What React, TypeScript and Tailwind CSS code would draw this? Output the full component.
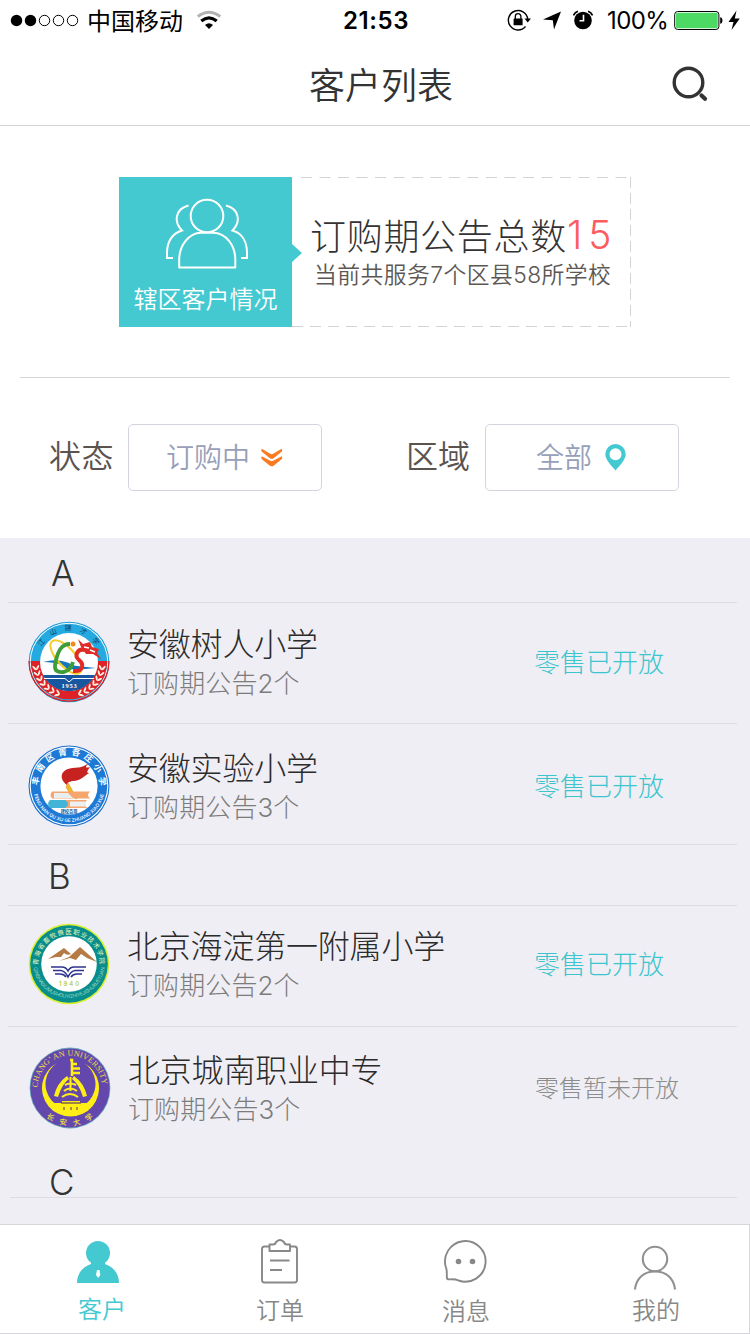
import React from 'react';

const FONT = "font-['Inter','Noto_Sans_CJK_SC',sans-serif] font-[350]";

function StatusBar() {
  return (
    <div className="flex h-10 items-center bg-white text-black">
      <svg className="ml-[10px] h-10 w-[70px]" viewBox="0 0 70 40">
        <circle cx="6.500" cy="20.500" r="5.700" />
        <circle cx="20.500" cy="20.500" r="5.700" />
        <g fill="none" stroke="#000" strokeWidth="1">
          <circle cx="34.500" cy="20.500" r="5.200" />
          <circle cx="48.500" cy="20.500" r="5.200" />
          <circle cx="62.500" cy="20.500" r="5.200" />
        </g>
      </svg>
      <span className="ml-[7px] w-[98px] pt-1 text-[24px] leading-10 font-normal">中国移动</span>
      <svg className="ml-3 h-10 w-6" viewBox="0 0 24 40" fill="none">
        <path d="M0.800 16.500Q12 8 23.200 16.500" stroke="#b3b3b3" strokeWidth="3" />
        <path d="M4.300 21Q12 14.800 19.700 21" stroke="#000" strokeWidth="3.200" />
        <path d="M12 29L8 25Q12 21.300 16 25Z" fill="#000" />
      </svg>
      <span className="ml-[122px] w-[68px] pt-[2px] text-[24px] leading-10 font-semibold tracking-[0.6px]">21:53</span>
      <svg className="ml-[96px] h-10 w-6" viewBox="0 0 24 40">
        <path d="M18.500 26.500A9.700 9.700 0 1 1 20.700 19" fill="none" stroke="#000" strokeWidth="1.400" />
        <path d="M17.500 18.500H24L20.700 22.500Z" />
        <rect x="6.600" y="18.500" width="9" height="6.800" rx="0.500" />
        <path d="M8.300 19v-2.500a2.800 2.800 0 0 1 5.600 0V19" fill="none" stroke="#000" strokeWidth="1.300" />
      </svg>
      <svg className="ml-[11px] h-10 w-5" viewBox="0 0 20 40">
        <path d="M19 11.500L12 29.500L10.800 20.200L1 19.500Z" />
      </svg>
      <svg className="ml-[11px] h-10 w-5" viewBox="0 0 20 40">
        <circle cx="10" cy="20.500" r="8.800" />
        <path d="M10.500 14.800V20.800H6.500" fill="none" stroke="#fff" strokeWidth="1.600" />
        <path d="M0.500 15.500A7 7 0 0 1 5 11.200M15 11.200A7 7 0 0 1 19.500 15.500" fill="none" stroke="#000" strokeWidth="1.600" />
      </svg>
      <span className="ml-[14px] w-[62px] pt-[2px] text-[24px] leading-10 font-normal tracking-[-0.6px]">100%</span>
      <svg className="ml-[5px] h-10 w-[70px]" viewBox="0 0 70 40">
        <rect x="0.700" y="11.500" width="44.200" height="18" rx="3" fill="#fff" stroke="#000" strokeWidth="1" />
        <rect x="2" y="12.800" width="41.700" height="15.500" rx="1.500" fill="#4cd964" />
        <path d="M46.200 17.300c3 0 3 6.400 0 6.400z" />
        <path d="M62.500 10.500L54.500 22H59.500L57.500 30L65.800 18.500H60.800Z" />
      </svg>
    </div>
  );
}

function Seal({ children }: { children: React.ReactNode }) {
  return (
    <svg className="h-[82px] w-[82px] shrink-0" viewBox="-41 -41 82 82">
      {children}
    </svg>
  );
}

const leaves = [8, 18, 28, 38, 48, 58, 68];

function DragonSeal() {
  return (
    <Seal>
      <circle r="40.300" fill="#169bd5" />
      <circle r="39.300" fill="#fff" />
      <circle r="38.300" fill="#25a9e1" />
      <path d="M-38.300 -1H38.300A38.300 38.300 0 0 1 -38.300 -1Z" fill="#de2027" />
      <path d="M-40 -1A40 40 0 0 0 40 -1" fill="none" stroke="#de2027" strokeWidth="1.300" />
      <circle r="29" fill="#fff" />
      <path d="M-26 13H26A29 29 0 0 1 -26 13Z" fill="#17579f" />
      <path d="M-25 16.500H-4L0 20L4 16.500H25" fill="none" stroke="#fff" strokeWidth="1" />
      <path d="M-26 0Q-12 -4 0 1Q2 3 8 4L27 6Q10 8 -3 7Q-4 1 -26 0Z" fill="#1476bd" />
      <ellipse cx="-3" cy="-5" rx="9" ry="21" transform="rotate(-42 -3 -5)" fill="none" stroke="#f2ce29" strokeWidth="2" />
      <path d="M1 -18C-8 -18 -11 -10 -13 -2S-15 11 -5 10Q2 8 4 0" fill="none" stroke="#3d9d38" strokeWidth="3.800" />
      <path d="M16 -12C8 -14 5 -6 10 -2S15 10 4 9" fill="none" stroke="#e02c26" strokeWidth="4" />
      <path d="M9 -23L14 -18L21 -20L23 -15L30 -13L28 -9L32 -3L24 -8L17 -8L12 -15Z" fill="#e02c26" />
      <path d="M15 -15l5 1M21 -12l5 2" stroke="#fff" strokeWidth="1.400" />
      <circle cx="4" cy="-18" r="2.500" fill="#ee8c21" />
      {leaves.map((a) => (
        <g key={a} fill="#fff0df">
          <g transform={`rotate(${a}) translate(33.500 0)`}>
            <ellipse cx="-2" rx="1" ry="2.800" transform="rotate(-35)" />
            <ellipse cx="2" rx="1" ry="2.800" transform="rotate(35)" />
          </g>
          <g transform={`rotate(${180 - a}) translate(33.500 0)`}>
            <ellipse cx="-2" rx="1" ry="2.800" transform="rotate(35)" />
            <ellipse cx="2" rx="1" ry="2.800" transform="rotate(-35)" />
          </g>
        </g>
      ))}
      <path id="dragon-arc" d="M-30.700 -4A30.900 30.900 0 0 1 30.700 -4" fill="none" />
      <text fontSize="7" fill="#103c63" className="font-normal">
        <textPath href="#dragon-arc" startOffset="53%" textAnchor="middle" letterSpacing="7.500">江山锦才学</textPath>
      </text>
      <text x="0.500" y="25.500" textAnchor="middle" fontSize="6.500" letterSpacing="0.800" fill="#fff" className="font-['Liberation_Serif',serif] font-bold">1953</text>
    </Seal>
  );
}

function BookSeal() {
  return (
    <Seal>
      <circle r="40.500" fill="#1a6fc9" />
      <circle r="39.400" fill="#fff" />
      <circle r="38.300" fill="#1c7ad6" />
      <circle r="28.600" fill="#fff" />
      <path d="M-2 -1C-11 -8 -8 -17 4 -18C8 -19 11 -17 20 -23C15 -18 17 -18 21 -19C16 -12 19 -14 20 -13C14 -9 11 -5 4 -5C-1 -4 -1 -4 -2 -1Z" fill="#c62220" />
      <path d="M-1 -3L2 2L8 13L2 10L-3 1Z" fill="#f2ba22" stroke="#dc8c22" strokeWidth="0.600" />
      <path d="M-17 5.500H21Q17 9 21 12.500H-17Q-20 9 -17 5.500Z" fill="#f6a56d" />
      <path d="M-15 7H-1L4 12H-15Z" fill="#e9eef0" />
      <path d="M-17 14H18Q14 18 18 22H-17Q-21 18 -17 14Z" fill="#f6a56d" />
      <path d="M1 15.500H17Q14.500 18 17 20.500H1Z" fill="#ecf0f2" />
      <path d="M-19 14H-4Q2 18 -4 22H-19Q-23 18 -19 14Z" fill="#42b4d7" />
      <path id="book-top" d="M-30.400 3A30.600 30.600 0 1 1 30.400 3" fill="none" />
      <path id="book-bottom" d="M-36 0A36 36 0 0 0 36 0" fill="none" />
      <text fontSize="8.500" fill="#fff" className="font-bold">
        <textPath href="#book-top" startOffset="52%" textAnchor="middle" letterSpacing="4">丰南区胥各庄小学</textPath>
      </text>
      <text fontSize="4.800" fill="#e4efff" className="font-semibold">
        <textPath href="#book-bottom" startOffset="50%" textAnchor="middle">FENG NAN QU XU GE ZHUANG XIAO XUE</textPath>
      </text>
      <text x="0" y="27" textAnchor="middle" fontSize="4.200" fill="#19599e" className="font-bold">建校百周</text>
    </Seal>
  );
}

function MountainSeal() {
  return (
    <Seal>
      <circle r="40.300" fill="#d9ef2b" />
      <circle r="38.800" fill="#078d8d" />
      <circle r="27.800" fill="#fff" />
      <path d="M-21 -5L-5 -16L2 -10Q-2 -8 -5 -11L-8 -7L-13 -7ZM-10 -3L0 -7L11 -17L28 -2L18 -6L12 -10L7 -4L1 -6Z" fill="#b57b45" />
      <path d="M-18 3H-7Q-3 3 -1 7Q1 3 5 3H17M-16 6.500H-8Q-4 7 -1 13Q2 7 6 6.500H15M-14 10H-9Q-5 10 -3 13M13 10H8Q4 10 2 13" fill="none" stroke="#30328f" strokeWidth="1.500" />
      <text x="1" y="22" textAnchor="middle" fontSize="6" letterSpacing="2" fill="#a9c727" className="font-medium">1940</text>
      <path id="mount-top" d="M-31 1A31 31 0 0 1 31 1" fill="none" />
      <path id="mount-bottom" d="M-36 -2A36 36 0 0 0 36 -2" fill="none" />
      <text fontSize="6.500" fill="#e8f5ba" className="font-normal">
        <textPath href="#mount-top" startOffset="50%" textAnchor="middle" letterSpacing="1">青海省畜牧兽医职业技术学院</textPath>
      </text>
      <text fontSize="5" fill="#c5e5ca">
        <textPath href="#mount-bottom" startOffset="50%" textAnchor="middle" letterSpacing="-0.200">QINGHAIXUMUSHOUYIZHIYEJISHUXUEYUAN</textPath>
      </text>
    </Seal>
  );
}

function ChanganSeal() {
  return (
    <Seal>
      <circle r="40.400" fill="#69a6bd" />
      <circle r="39.600" fill="#6447ad" />
      <path d="M-13 -25A28.500 28.500 0 1 0 14 -25A25 25 0 1 1 -13 -25Z" fill="#ffef16" />
      <path d="M-8 13H10V15H19A25 25 0 0 1 -17 15H-8Z" fill="#ffef16" />
      <path d="M-9 15H11M-6 19v3M1 19v3M7 19v3" stroke="#806050" strokeWidth="1.300" />
      <path d="M0 -28H2V-12M2 -24H7M2 -19.500H10M2 -15H10" fill="none" stroke="#ffef16" strokeWidth="2.600" />
      <path d="M-3 -12Q-13 -5 -16 8L-12 9Q-8 -4 -1 -9ZM4 -12Q14 -5 17 8L13 9Q9 -4 2 -9Z" fill="#ffef16" />
      <path d="M-5 -3Q0 -6 6 -3M-6 3Q0 -2 7 3M-8 9Q0 3 8 9M0.500 -11V3" fill="none" stroke="#ffef16" strokeWidth="2.100" />
      <path id="changan-top" d="M-28.900 15A32.500 32.500 0 1 1 28.900 15" fill="none" />
      <text fontSize="8" fill="#e6df49" className="font-['Liberation_Serif',serif] font-normal">
        <textPath href="#changan-top" startOffset="49%" textAnchor="middle" letterSpacing="0.200">CHANG’ AN UNIVERSITY</textPath>
      </text>
      <path id="changan-bottom" d="M-37.500 0A37.500 37.500 0 0 0 37.500 0" fill="none" />
      <text fontSize="7.500" fill="#f1e638" className="font-medium">
        <textPath href="#changan-bottom" startOffset="53%" textAnchor="middle" letterSpacing="7">长安大学</textPath>
      </text>
    </Seal>
  );
}

function SummaryCard() {
  return (
    <div className="relative ml-[119px] flex h-[150px] w-[512px]">
      <div className="flex w-[173px] flex-col items-center bg-[#44c9d1] text-white">
        <svg className="mt-[21px] ml-[3px] h-[72px] w-[84px]" viewBox="0 0 84 72" fill="none" stroke="#fff" strokeWidth="2">
          <circle cx="42" cy="18" r="16.300" />
          <path d="M14.200 69.500V62C14.200 47 24 35 36 34.700H48C61 35 70.300 47 70.300 62V69.500Z" strokeLinejoin="round" />
          <path d="M23.500 7.500C10 11 8.500 24 17 32.500C8 35 2 43 2 55V60H8" />
          <path d="M61 7.500C74.500 11 76 24 67.500 32.500C76.500 35 82 43 82 55V60H76" />
        </svg>
        <span className="mt-3 text-[24px] leading-9">辖区客户情况</span>
      </div>
      <svg className="absolute top-[67px] left-[173px] h-[18px] w-[10px]" viewBox="0 0 10 18">
        <path d="M0 0L10 9L0 18Z" fill="#44c9d1" />
      </svg>
      <svg className="absolute inset-y-0 left-[173px] h-[150px] w-[339px]" viewBox="0 0 339 150" fill="none" stroke="#d3d3d3">
        <path d="M9 0.500H339" strokeDasharray="11 7.500" />
        <path d="M338.500 0V150" strokeDasharray="11 5" />
        <path d="M0 149.500H339" strokeDasharray="11 7" />
      </svg>
      <div className="flex flex-col pl-[18px] font-light whitespace-nowrap">
        <div className="mt-9 flex h-12 text-[36px] leading-12 text-[#333]">
          <span className="w-[257px] tracking-[0.7px]">订购期公告总数</span>
          <span className="-mt-[2px] text-[39px] leading-12 tracking-[6px] text-[#fc5c60]">15</span>
        </div>
        <div className="ml-1 h-7 text-[22.800px] leading-7 font-[350] tracking-[0.45px] text-[#5d5754]">当前共服务7个区县58所学校</div>
      </div>
    </div>
  );
}

type RowProps = {
  seal: React.ReactNode;
  name: string;
  notice: string;
  pad: string;
  status: string;
  open?: boolean;
  line?: string;
};

function SchoolRow({ seal, name, notice, pad, status, open = true, line = 'h-[121px] border-b' }: RowProps) {
  return (
    <div className={`mr-[13px] ml-2 flex border-[#dcdce1] font-light ${line} ${pad}`}>
      {seal}
      <div className="ml-[17px] flex w-[407px] flex-col whitespace-nowrap">
        <span className="mt-1 h-10 text-[32px] leading-10 tracking-[-0.2px] text-[#2b2b2b]">{name}</span>
        <span className="mt-[3px] h-8 text-[26px] leading-8 tracking-[0.1px] text-[#7c7c7c]">{notice}</span>
      </div>
      <span className={open ? 'mt-[26px] h-8 whitespace-nowrap text-[26px] leading-8 text-[#3cc5ce]' : 'mt-[26px] h-8 whitespace-nowrap text-[24px] leading-8 text-[#8c8c8c]'}>{status}</span>
    </div>
  );
}

export default function App() {
  return (
    <div className={`flex h-[1334px] w-[750px] flex-col overflow-hidden bg-white ${FONT}`}>
      <StatusBar />
      <header className="flex h-[86px] items-start border-b border-[#d2d2d2]">
        <h1 className="mt-[22px] ml-[309px] w-36 text-[36px] leading-12 whitespace-nowrap text-[#333]">客户列表</h1>
        <svg className="mt-6 ml-[217px] h-10 w-10" viewBox="0 0 40 40" fill="none" stroke="#333">
          <circle cx="18.500" cy="18.500" r="14.300" strokeWidth="3.400" />
          <path d="M31.500 31.500L35 34.800" strokeWidth="4.200" strokeLinecap="round" />
        </svg>
      </header>

      <section className="mx-0 h-[252px] pt-[51px]">
        <SummaryCard />
        <div className="mx-5 mt-[50px] border-t border-[#d6d6d6]" />
      </section>

      <section className="flex h-40 items-start pt-[46px] text-[#5a534f]">
        <span className="mt-[9px] ml-[49px] w-[79px] text-[32px] leading-12 tracking-[0.5px]">状态</span>
        <button className="flex h-[67px] w-[194px] items-start rounded-[5px] border border-[#d4d4df] pl-[37px] text-left">
          <span className="mt-[9px] w-[84px] text-[28px] leading-12 text-[#97a0b8]">订购中</span>
          <svg className="mt-[23px] ml-[11px] h-5 w-[22px]" viewBox="0 0 22 20" fill="#fa7a22" stroke="#fa7a22" strokeWidth="1.200" strokeLinejoin="round">
            <path d="M1 1.500L8.500 6Q10.800 7.500 13 6L20.500 1.500V3L12.500 9.500Q10.800 11 9 9.500L1 3Z" />
            <path d="M1 9L8.500 13Q10.800 14.500 13 13L20.500 9V10.500L12.500 17Q10.800 18.500 9 17L1 10.500Z" />
          </svg>
        </button>
        <span className="mt-[9px] ml-[84px] w-[79px] text-[32px] leading-12">区域</span>
        <button className="flex h-[67px] w-[194px] items-start rounded-[5px] border border-[#d4d4df] pl-[50px] text-left">
          <span className="mt-[9px] w-14 text-[28px] leading-12 text-[#97a0b8]">全部</span>
          <svg className="mt-[19px] ml-[13px] h-[27px] w-[21px]" viewBox="0 0 21 27">
            <path fillRule="evenodd" fill="#44c9d1" d="M10.500 0A10.200 10.200 0 0 0 0.300 10.200C0.300 16 7 22 10.500 26.500C14 22 20.700 16 20.700 10.200A10.200 10.200 0 0 0 10.500 0ZM10.500 4.200A6 6 0 1 1 10.500 16.200A6 6 0 1 1 10.500 4.200Z" />
          </svg>
        </button>
      </section>

      <main className="h-[686px] bg-[#efeef4] text-[#333]">
        <div className="mr-[13px] ml-2 h-[65px] border-b border-[#dcdce1] pt-[13px] pl-[43px] text-[35px] leading-[44px]">A</div>
        <SchoolRow seal={<DragonSeal />} name="安徽树人小学" notice="订购期公告2个" pad="pt-[18px] pl-5" status="零售已开放" />
        <SchoolRow seal={<BookSeal />} name="安徽实验小学" notice="订购期公告3个" pad="pt-[21px] pl-5" status="零售已开放" />
        <div className="mr-[13px] ml-2 h-[61px] border-b border-[#dcdce1] pt-[9px] pl-[40px] text-[35px] leading-[44px]">B</div>
        <SchoolRow seal={<MountainSeal />} name="北京海淀第一附属小学" notice="订购期公告2个" pad="pt-[17px] pl-5" status="零售已开放" />
        <SchoolRow seal={<ChanganSeal />} name="北京城南职业中专" notice="订购期公告3个" pad="pt-5 pl-[21px]" status="零售暂未开放" open={false} line="h-[122px]" />
        <div className="mr-[13px] ml-[10px] h-[49px] border-b border-[#dcdce1] pt-[11px] pl-[39px] text-[35px] leading-[44px]">C</div>
      </main>

      <nav className="flex h-[110px] border border-l-0 border-[#d6d6da] bg-white text-[24px] leading-8 text-[#888]">
        <div className="flex w-[204px] flex-col pl-[77px] text-[#44c9d1]">
          <svg className="mt-4 h-[42px] w-[42px]" viewBox="0 0 42 42">
            <circle cx="21" cy="12" r="12" fill="#44c9d1" />
            <path d="M0 42C0 33 5 26 14 23V21H28V23C37 26 42 33 42 42Z" fill="#44c9d1" />
            <path d="M20 29H22.500L23.300 34L21.200 37L19 34Z" fill="#fff" />
          </svg>
          <span className="mt-[11px] ml-px">客户</span>
        </div>
        <div className="flex w-[196px] flex-col pl-[52px]">
          <svg className="mt-[14px] ml-[5px] h-[46px] w-[38px]" viewBox="0 0 38 46" fill="none" stroke="#888" strokeWidth="1.900" strokeLinejoin="round">
            <path d="M8.500 7.500H3.500Q1 7.500 1 10V41Q1 43.500 3.500 43.500H33.500Q36 43.500 36 41V10Q36 7.500 33.500 7.500H29" />
            <path d="M8.500 12V5.500H12Q14.500 5.500 15 3Q19 -1 23 3Q23.500 5.500 26 5.500H29V12Z" />
            <path d="M9 21.500H28.500M9 31H21" />
          </svg>
          <span className="mt-[10px]">订单</span>
        </div>
        <div className="flex w-[192px] flex-col pl-[42px]">
          <svg className="mt-[13px] ml-px h-[46px] w-[44px]" viewBox="0 0 44 46" fill="none" stroke="#888" strokeWidth="1.900">
            <path d="M3.300 30.500A20.300 20.300 0 1 1 15.500 42.500C12 40.800 9 41.400 6 41.400Q3.800 41.400 3.800 39C3.800 35 4 33 3.300 30.500Z" strokeLinejoin="round" />
            <circle cx="15.500" cy="23.500" r="2.800" fill="#888" stroke="none" />
            <circle cx="29.500" cy="23.500" r="2.800" fill="#888" stroke="none" />
          </svg>
          <span className="mt-3">消息</span>
        </div>
        <div className="flex flex-col pl-[40px]">
          <svg className="mt-5 ml-[2px] h-[46px] w-[42px]" viewBox="0 0 42 46" fill="none" stroke="#909090" strokeWidth="2.100">
            <circle cx="21" cy="14" r="12.200" />
            <path d="M1 44.500C2 33 10 26.500 21 26.500S40 33 41 44.500" />
          </svg>
          <span className="mt-1">我的</span>
        </div>
      </nav>
    </div>
  );
}
